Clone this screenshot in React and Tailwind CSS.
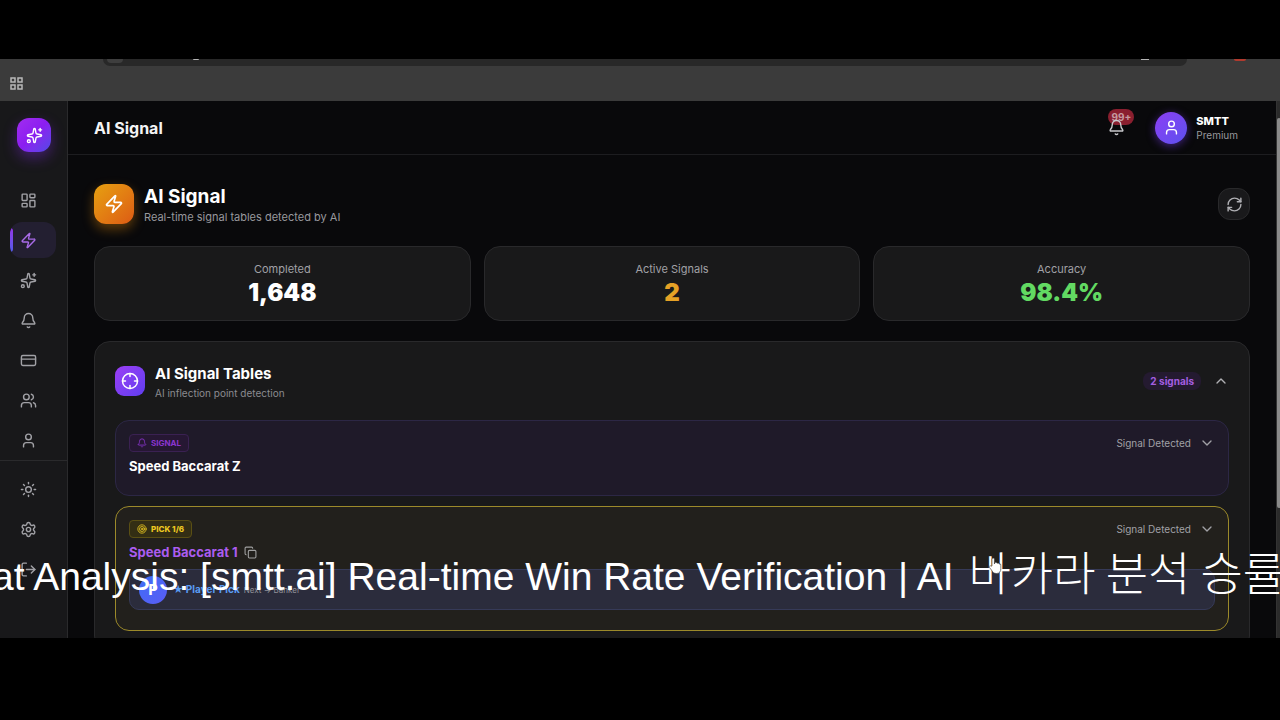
import {
  Bell,
  ChevronDown,
  ChevronUp,
  Copy,
  CreditCard,
  Crosshair,
  LayoutDashboard,
  LogOut,
  RefreshCw,
  Settings,
  Sparkles,
  Sun,
  Target,
  User,
  Users,
  Zap,
} from "lucide-react";

const NAV = [
  { label: "Dashboard", icon: LayoutDashboard },
  { label: "AI Signal", icon: Zap, active: true },
  { label: "AI Analysis", icon: Sparkles },
  { label: "Notifications", icon: Bell },
  { label: "Billing", icon: CreditCard },
  { label: "Community", icon: Users },
  { label: "Profile", icon: User },
];

const TOOLS = [
  { label: "Theme", icon: Sun },
  { label: "Settings", icon: Settings },
  { label: "Log out", icon: LogOut },
];

const STATS = [
  { label: "Completed", value: "1,648", color: "text-white" },
  { label: "Active Signals", value: "2", color: "text-[#e5a126]" },
  { label: "Accuracy", value: "98.4%", color: "text-[#62d962]" },
];

function BrowserBar() {
  return (
    <div className="h-[42px] shrink-0 overflow-hidden bg-[#3b3b3b]">
      <div className="mr-[93px] ml-[103px] flex h-[7px] items-start rounded-b-xl bg-[#282828] pl-1">
        <span className="h-1 w-4 rounded-b-full bg-[#3e3e3e]" />
        <span className="ml-[70px] h-px w-1.5 rounded-b-full bg-[#b5b5b5]" />
        <span className="mr-[38px] ml-auto h-px w-2 bg-[#b5b5b5]" />
      </div>
      <div className="-mt-[7px] mr-[34px] ml-auto h-0.5 w-3 rounded-b-full bg-[#b03a2e]" />
      <button aria-label="Apps" className="mt-4 ml-[10px] block">
        <svg width="13" height="13" viewBox="0 0 13 13" fill="none" stroke="#b9b9b9" strokeWidth="1.5">
          <rect x="1" y="1" width="4" height="4" />
          <rect x="8" y="1" width="4" height="4" />
          <rect x="1" y="8" width="4" height="4" />
          <rect x="8" y="8" width="4" height="4" />
        </svg>
      </button>
    </div>
  );
}

function NavButton({ label, icon: Icon, active }) {
  return (
    <button
      aria-label={label}
      className={
        active
          ? "relative flex h-9 items-center overflow-hidden rounded-xl bg-[#231f31] pl-[10px] text-[#a96be8]"
          : "flex h-9 items-center rounded-xl pl-[10px] text-[#a1a1a6]"
      }
    >
      {active && (
        <span className="absolute top-1.5 left-0 h-6 w-[3px] rounded-r-full bg-linear-to-b from-[#9333ea] to-[#4f5ae8]" />
      )}
      <Icon size={17} />
    </button>
  );
}

function Sidebar() {
  return (
    <aside className="w-[68px] shrink-0 border-r border-[#2a2a2c] bg-[#18181a]">
      <div className="mt-[17px] ml-[17px] flex size-[34px] items-center justify-center rounded-xl bg-linear-to-br from-[#a22bf0] via-[#8b1df0] to-[#4f46e5] text-white shadow-[0_6px_14px_rgba(130,40,230,0.4)]">
        <Sparkles size={17} />
      </div>
      <nav className="mt-[30px] grid gap-1 pr-[11px] pl-[10px]">
        {NAV.map((item) => (
          <NavButton key={item.label} {...item} />
        ))}
      </nav>
      <div className="mt-0.5 grid gap-1 border-t border-[#2a2a2c] pt-[10px] pr-[11px] pl-[10px]">
        {TOOLS.map((item) => (
          <NavButton key={item.label} {...item} />
        ))}
      </div>
    </aside>
  );
}

function TopBar() {
  return (
    <header className="flex h-[54px] shrink-0 items-center border-b border-[#1d1d20] pr-[38px] pl-[26px]">
      <h1 className="text-base font-bold text-[#f4f4f5]">AI Signal</h1>
      <button aria-label="Notifications" className="relative ml-auto text-[#c9c9cd]">
        <span className="absolute -top-2.5 left-0 flex h-4 w-[26px] items-center justify-center rounded-full bg-[#8a1f2f] text-[10px] font-bold text-[#c59aa0]">
          99+
        </span>
        <Bell size={17} className="relative" />
      </button>
      <button className="ml-[30px] flex items-center gap-[9px] text-left">
        <span className="flex size-8 items-center justify-center rounded-full bg-linear-to-br from-[#8b3df5] to-[#5b50ee] text-white shadow-[0_2px_8px_rgba(120,60,240,0.5)]">
          <User size={17} />
        </span>
        <span>
          <span className="block text-[11px] leading-[14px] font-extrabold text-white">SMTT</span>
          <span className="block text-[10px] leading-[14px] text-[#98989d]">Premium</span>
        </span>
      </button>
    </header>
  );
}

function RowStatus() {
  return (
    <button className="flex items-center gap-2 text-[10px] leading-[18px] text-[#a1a1a6]">
      Signal Detected
      <ChevronDown size={16} />
    </button>
  );
}

function SignalTables() {
  return (
    <section className="mt-5 rounded-2xl border border-[#29292b] bg-[#19191a] px-5 pt-[18px] pb-5">
      <div className="flex items-center">
        <span className="flex size-[30px] items-center justify-center rounded-[9px] bg-linear-to-br from-[#9b3df5] to-[#5f3df0] text-white">
          <Crosshair size={18} />
        </span>
        <div className="ml-[10px] pt-1">
          <h3 className="text-[15px] leading-5 font-bold text-white">AI Signal Tables</h3>
          <p className="text-[10px] leading-[18px] text-[#8b8b90]">AI inflection point detection</p>
        </div>
        <span className="ml-auto rounded-lg bg-[#241a30] px-[7px] text-[10px] leading-[18px] font-bold text-[#a55ee0]">
          2 signals
        </span>
        <button aria-label="Collapse" className="ml-3 text-[#b0b0b4]">
          <ChevronUp size={16} />
        </button>
      </div>

      <div className="mt-[18px] grid gap-[10px]">
        <article className="flex h-[76px] items-start justify-between rounded-[14px] border border-[#2c2745] bg-[#1f1a29] px-[13px] pt-[13px]">
          <div>
            <span className="flex h-[18px] w-fit items-center gap-1 rounded border border-[#3a2152] bg-[#261733] px-[7px] text-[8px] font-bold text-[#8b35cf]">
              <Bell size={10} />
              SIGNAL
            </span>
            <h4 className="mt-1 text-[13px] leading-5 font-bold text-white">Speed Baccarat Z</h4>
          </div>
          <RowStatus />
        </article>

        <article className="rounded-[14px] border border-[#9c8a2a] bg-[#22201c] px-[13px] pt-[13px] pb-5">
          <div className="flex items-start justify-between">
            <div>
              <span className="flex h-[18px] w-fit items-center gap-1 rounded border border-[#5a4f14] bg-[#332e14] px-[7px] text-[8px] font-extrabold text-[#ecc921]">
                <Target size={10} />
                PICK 1/6
              </span>
              <div className="mt-1 flex items-center gap-[6px] text-[#a0a0a0]">
                <h4 className="text-[13px] leading-5 font-bold text-[#ab5cf0]">Speed Baccarat 1</h4>
                <button aria-label="Copy table name">
                  <Copy size={13} />
                </button>
              </div>
            </div>
            <RowStatus />
          </div>
          <div className="mt-[7px] flex h-[41px] items-center rounded-[10px] border border-[#363a58] bg-[#2b2c3c] pl-[9px]">
            <span className="flex size-7 items-center justify-center rounded-full bg-linear-to-br from-[#3b6df5] to-[#5a5cf5] text-sm font-extrabold text-white">
              P
            </span>
            <span className="ml-[6px] text-[10px] font-bold text-[#5a9cf5]">★ Player Pick</span>
            <span className="ml-1 text-[8px] text-[#929299]">Next → Banker</span>
          </div>
        </article>
      </div>
    </section>
  );
}

function Ticker() {
  return (
    <div className="pointer-events-none absolute inset-x-0 bottom-9 overflow-hidden">
      <p className="-ml-2 font-['Liberation_Sans',sans-serif] text-[39px] leading-[50px] whitespace-nowrap text-white">
        at Analysis: [smtt.ai] Real-time Win Rate Verification | AI{" "}
        <span className="ml-1 font-['Noto_Sans_CJK_KR',sans-serif] text-[46px] font-light">바카라 분석 승률</span>
      </p>
      <svg className="absolute top-3 left-[988px]" width="14" height="18" viewBox="0 0 14 18">
        <path
          d="M4 9V2.200a1.200 1.200 0 0 1 2.400 0V7l.5-1.200a1 1 0 0 1 1.900.3l.5.2a1 1 0 0 1 1.700.6l.4.2a1 1 0 0 1 1.400 1v3.600c0 2.500-1.200 4.800-4.300 4.800-2.500 0-3.700-1.200-4.700-3L1.300 10.200c-.5-1.200 1-1.900 1.800-1z"
          fill="#fff"
          stroke="#333"
          strokeWidth=".6"
        />
      </svg>
    </div>
  );
}

export default function App() {
  return (
    <div className="flex h-screen flex-col bg-black pt-[59px] pb-[82px] font-[Inter,sans-serif]">
      <div className="relative flex min-h-0 flex-1 flex-col overflow-hidden">
        <BrowserBar />
        <div className="flex min-h-0 flex-1 overflow-hidden bg-[#09090b]">
          <Sidebar />
          <div className="flex min-w-0 flex-1 flex-col">
            <TopBar />
            <main className="min-h-0 flex-1 overflow-hidden px-[26px] pt-7">
              <div className="flex items-center">
                <span className="flex size-10 items-center justify-center rounded-xl bg-linear-to-br from-[#e6a010] to-[#dc5a14] text-white shadow-[0_5px_12px_rgba(230,140,10,0.4)]">
                  <Zap size={20} />
                </span>
                <div className="ml-[10px] pt-0.5">
                  <h2 className="text-[19px] leading-6 font-bold text-white">AI Signal</h2>
                  <p className="text-[11px] leading-4 text-[#98989d]">Real-time signal tables detected by AI</p>
                </div>
                <button
                  aria-label="Refresh"
                  className="ml-auto flex size-8 items-center justify-center rounded-xl border border-[#29292b] bg-[#19191b] text-[#b0b0b4]"
                >
                  <RefreshCw size={17} />
                </button>
              </div>

              <section className="mt-[21px] grid grid-cols-3 gap-[13px]">
                {STATS.map((stat) => (
                  <div
                    key={stat.label}
                    className="rounded-2xl border border-[#29292b] bg-[#19191a] pt-[13px] pb-3 text-center"
                  >
                    <div className="text-[11px] leading-[18px] text-[#a1a1a6]">{stat.label}</div>
                    <div className={`text-2xl leading-[30px] font-black ${stat.color}`}>{stat.value}</div>
                  </div>
                ))}
              </section>

              <SignalTables />
            </main>
          </div>
          <div className="w-1 shrink-0 border-l border-[#333] bg-[#2b2b2b] pt-[17px]">
            <div className="h-[390px] w-1 rounded-full bg-[#8a8a8a]" />
          </div>
        </div>
        <Ticker />
      </div>
    </div>
  );
}
